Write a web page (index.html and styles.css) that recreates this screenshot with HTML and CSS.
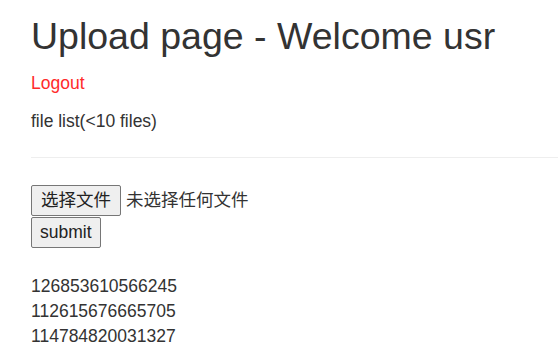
FILE: index.html
```html
<!DOCTYPE html>
<html lang="zh">

<head>
    <meta charset="UTF-8">
    <meta name="viewport" content="width=device-width, initial-scale=1.0">
    <title>Upload page</title>
    <link rel="stylesheet" href="styles.css">
</head>

<body>
    <div class="container">
        <h2 class="title">Upload page - Welcome usr</h2>
        <p class="logout"><a href="#">Logout</a></p>
        <p class="file-list">file list(&lt;10 files)</p>
        <hr>

        <form class="upload-form">
            <div class="file-row">
                <label class="btn btn-file">选择文件</label>
                <span class="file-name">未选择任何文件</span>
            </div>
            <button type="button" class="btn">submit</button>
        </form>

        <ul class="files">
            <li>126853610566245</li>
            <li>112615676665705</li>
            <li>114784820031327</li>
        </ul>
    </div>
</body>
</html>
```

FILE: styles.css
```css
body {
    font-family: 'Liberation Sans', Arial, 'Noto Sans CJK SC', sans-serif;
    font-size: 17.5px;
    line-height: 25px;
    color: #333;
    background-color: #fff;
    margin: 0;
    padding: 0;
}

.container {
    padding-left: 31px;
}

.title {
    font-size: 37.5px;
    font-weight: 400;
    line-height: 41px;
    margin: 16px 0 14px;
}

.logout {
    margin: 0 0 13px;
}

.logout a {
    color: #ff2a2a;
    text-decoration: none;
}

.file-list {
    margin: 0;
}

hr {
    border: 0;
    border-top: 1px solid #eee;
    margin: 23px 0 27px;
}

.upload-form {
    margin: 0;
}

.file-row {
    display: flex;
    align-items: center;
    gap: 5px;
    margin-bottom: 1px;
}

.btn {
    display: inline-block;
    font-family: inherit;
    font-size: 17.5px;
    line-height: 25px;
    color: #222;
    background-color: #efefef;
    border: 1px solid #767676;
    border-radius: 2px;
    padding: 2px 8px;
    cursor: pointer;
}

.btn-file {
    padding: 2px 9px;
}

.file-name {
    color: #333;
}

.files {
    list-style: none;
    margin: 26px 0 0;
    padding: 0;
}
```
